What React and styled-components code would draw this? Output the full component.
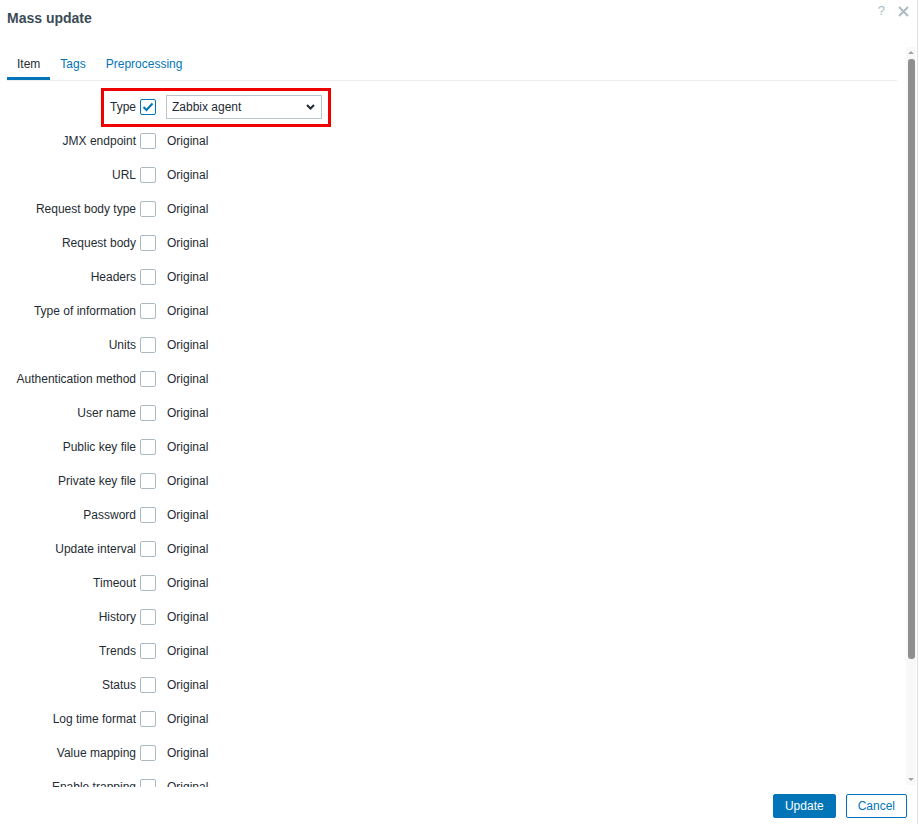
import React, { useState } from 'react';
import styled, { createGlobalStyle } from 'styled-components';

const FIELDS = [
  'JMX endpoint',
  'URL',
  'Request body type',
  'Request body',
  'Headers',
  'Type of information',
  'Units',
  'Authentication method',
  'User name',
  'Public key file',
  'Private key file',
  'Password',
  'Update interval',
  'Timeout',
  'History',
  'Trends',
  'Status',
  'Log time format',
  'Value mapping',
  'Enable trapping',
];

const TABS = ['Item', 'Tags', 'Preprocessing'];

const CheckMark = () => (
  <svg width="12" height="10" viewBox="0 0 12 10">
    <path
      d="M1.5 5 L4.5 8 L10.5 1.5"
      fill="none"
      stroke="#0275b8"
      strokeWidth="2"
    />
  </svg>
);

const App = () => {
  const [activeTab, setActiveTab] = useState('Item');
  const [checked, setChecked] = useState({ Type: true });

  const toggle = (name) =>
    setChecked((prev) => ({ ...prev, [name]: !prev[name] }));

  return (
    <>
      <GlobalStyle />
      <Dialog>
        <Header>
          <Title>Mass update</Title>
          <HeaderActions>
            <HelpButton>?</HelpButton>
            <CloseButton aria-label="Close">
              <svg width="11" height="11" viewBox="0 0 11 11">
                <path
                  d="M1 1 L10 10 M10 1 L1 10"
                  stroke="currentColor"
                  strokeWidth="2"
                />
              </svg>
            </CloseButton>
          </HeaderActions>
        </Header>

        <Body>
          <Content>
            <TabList>
              {TABS.map((tab) => (
                <Tab
                  key={tab}
                  $active={tab === activeTab}
                  onClick={() => setActiveTab(tab)}
                >
                  {tab}
                </Tab>
              ))}
            </TabList>

            <Form>
              <Row>
                <Highlight />
                <Label>Type</Label>
                <Checkbox
                  $checked={!!checked.Type}
                  onClick={() => toggle('Type')}
                >
                  {checked.Type && <CheckMark />}
                </Checkbox>
                <Select>
                  <span>Zabbix agent</span>
                  <svg width="9" height="6" viewBox="0 0 9 6">
                    <path
                      d="M1 1 L4.5 4.5 L8 1"
                      fill="none"
                      stroke="#1f2c33"
                      strokeWidth="2"
                    />
                  </svg>
                </Select>
              </Row>

              {FIELDS.map((name) => (
                <Row key={name}>
                  <Label>{name}</Label>
                  <Checkbox
                    $checked={!!checked[name]}
                    onClick={() => toggle(name)}
                  >
                    {checked[name] && <CheckMark />}
                  </Checkbox>
                  <Value>Original</Value>
                </Row>
              ))}
            </Form>
          </Content>

          <Scrollbar>
            <ScrollArrow $dir="up" />
            <ScrollTrack>
              <ScrollThumb />
            </ScrollTrack>
            <ScrollArrow $dir="down" />
          </Scrollbar>
        </Body>

        <Footer>
          <PrimaryButton>Update</PrimaryButton>
          <SecondaryButton>Cancel</SecondaryButton>
        </Footer>
      </Dialog>
    </>
  );
};

export default App;

const GlobalStyle = createGlobalStyle`
  html, body {
    margin: 0;
    padding: 0;
    background: #fff;
  }
  body {
    font-family: Arial, "Liberation Sans", sans-serif;
    font-size: 12px;
    color: #1f2c33;
  }
  * {
    box-sizing: border-box;
  }
`;

const Dialog = styled.div`
  width: 918px;
  height: 824px;
  background: #fff;
  border-right: 1px solid #dde3e0;
  display: flex;
  flex-direction: column;
`;

const Header = styled.div`
  height: 48px;
  flex: none;
  display: flex;
  justify-content: space-between;
  align-items: flex-start;
  padding: 9px 8px 0 7px;
`;

const Title = styled.h4`
  margin: 0;
  font-size: 14px;
  line-height: 18px;
  font-weight: bold;
  color: #3a4b57;
`;

const HeaderActions = styled.div`
  display: flex;
  align-items: center;
  gap: 13px;
  margin-top: -5px;
`;

const HelpButton = styled.button`
  border: none;
  background: none;
  padding: 0;
  font-family: Arial, "Liberation Sans", sans-serif;
  font-size: 13px;
  line-height: 14px;
  color: #acbbc2;
  cursor: pointer;
`;

const CloseButton = styled.button`
  border: none;
  background: none;
  padding: 0;
  width: 11px;
  height: 11px;
  color: #acbbc2;
  display: flex;
  cursor: pointer;
`;

const Body = styled.div`
  flex: 1;
  min-height: 0;
  display: flex;
`;

const Content = styled.div`
  flex: 1;
  overflow: hidden;
  padding: 6px 9px 0 7px;
`;

const TabList = styled.div`
  display: flex;
  border-bottom: 1px solid #ebeef0;
`;

const Tab = styled.div`
  padding: 0 10px 2px;
  line-height: 21px;
  font-size: 12px;
  border-bottom: 3px solid ${(p) => (p.$active ? '#0275b8' : 'transparent')};
  color: ${(p) => (p.$active ? '#1f2c33' : '#0275b8')};
  cursor: pointer;
`;

const Form = styled.div`
  display: flex;
  flex-direction: column;
  gap: 10px;
  padding-top: 14px;
`;

const Row = styled.div`
  position: relative;
  display: grid;
  grid-template-columns: 129px 16px 1fr;
  column-gap: 4px;
  align-items: center;
  height: 24px;
`;

const Highlight = styled.div`
  position: absolute;
  left: 94px;
  top: -7px;
  width: 230px;
  height: 39px;
  border: 3px solid #f00000;
  pointer-events: none;
`;

const Label = styled.label`
  text-align: right;
  white-space: nowrap;
  color: #1f2c33;
`;

const Checkbox = styled.span`
  width: 16px;
  height: 16px;
  border: 1px solid ${(p) => (p.$checked ? '#0275b8' : '#acbbc2')};
  border-radius: 2px;
  background: #fff;
  display: flex;
  align-items: center;
  justify-content: center;
  cursor: pointer;
`;

const Value = styled.span`
  padding-left: 7px;
  color: #1f2c33;
`;

const Select = styled.div`
  margin-left: 6px;
  width: 156px;
  height: 24px;
  border: 1px solid #b9c6cc;
  background: #fff;
  display: flex;
  align-items: center;
  justify-content: space-between;
  padding: 0 6px 0 5px;
  color: #1f2c33;
`;

const Scrollbar = styled.div`
  width: 10px;
  flex: none;
  margin: -1px 1px 2px 0;
  background: #f8f8f8;
  display: flex;
  flex-direction: column;
  align-items: center;
`;

const ScrollArrow = styled.div`
  flex: none;
  width: 0;
  height: 0;
  margin: 4px 0;
  border-left: 3px solid transparent;
  border-right: 3px solid transparent;
  ${(p) =>
    p.$dir === 'up'
      ? 'border-bottom: 3px solid #a3a3a3;'
      : 'border-top: 3px solid #a3a3a3;'}
`;

const ScrollTrack = styled.div`
  flex: 1;
  width: 100%;
  display: flex;
  justify-content: center;
  padding-top: 1px;
`;

const ScrollThumb = styled.div`
  width: 7px;
  height: 600px;
  background: #8f8f8f;
  border-radius: 3px;
`;

const Footer = styled.div`
  height: 37px;
  flex: none;
  display: flex;
  justify-content: flex-end;
  align-items: flex-start;
  gap: 10px;
  padding: 7px 10px 0 0;
`;

const BaseButton = styled.button`
  height: 24px;
  padding: 0 11px;
  border-radius: 2px;
  font-family: Arial, "Liberation Sans", sans-serif;
  font-size: 12px;
  line-height: 22px;
  cursor: pointer;
`;

const PrimaryButton = styled(BaseButton)`
  background: #0275b8;
  border: 1px solid #0275b8;
  color: #fff;
`;

const SecondaryButton = styled(BaseButton)`
  background: #fff;
  border: 1px solid #0275b8;
  color: #0275b8;
`;
